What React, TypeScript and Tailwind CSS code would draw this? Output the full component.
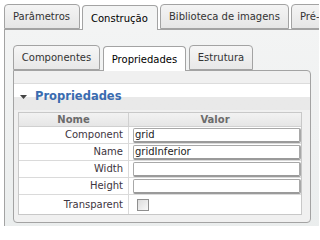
import React from 'react';

const font = { fontFamily: '"DejaVu Sans", Verdana, sans-serif' };

const OuterTab: React.FC<{ label: string; active?: boolean; w: string }> = ({ label, active, w }) => (
  <div
    className={`${w} h-[25px] shrink-0 border border-[#a3a3a3] rounded-t-[4px] flex items-center pl-[8px] text-[10px] text-[#333] ${
      active ? 'bg-[#f3f4f4] border-b-0 -mb-px relative z-10 text-black' : 'bg-gradient-to-b from-[#f4f4f4] to-[#e6e6e6] h-[24px]'
    }`}
  >
    {label}
  </div>
);

const InnerTab: React.FC<{ label: string; active?: boolean; w: string }> = ({ label, active, w }) => (
  <div
    className={`${w} h-[25px] shrink-0 border border-[#a3a3a3] rounded-t-[4px] flex items-center justify-center text-[10px] text-[#333] ${
      active ? 'bg-white border-b-0 -mb-px relative z-10 text-black' : 'bg-gradient-to-b from-[#f6f6f6] to-[#e8e8e8] h-[24px]'
    }`}
  >
    {label}
  </div>
);

const rows = [
  { label: 'Component', value: 'grid' },
  { label: 'Name', value: 'gridInferior' },
  { label: 'Width', value: '' },
  { label: 'Height', value: '' },
];

export default function App() {
  return (
    <div className="w-[319px] h-[226px] overflow-hidden bg-white" style={font}>
      <div className="pl-[4px] pt-[4px] w-[420px]">
        {/* outer tabs */}
        <div className="flex items-end gap-[2px]">
          <OuterTab label="Parâmetros" w="w-[76px]" />
          <OuterTab label="Construção" w="w-[76px]" active />
          <OuterTab label="Biblioteca de imagens" w="w-[129px]" />
          <OuterTab label="Pré-visualização" w="w-[110px]" />
        </div>

        {/* outer panel */}
        <div className="border border-[#a3a3a3] bg-gradient-to-b from-[#f3f4f4] to-[#eaeded] h-[210px] pl-[8px] pt-[15px]">
          {/* inner tabs */}
          <div className="flex items-end gap-[3px]">
            <InnerTab label="Componentes" w="w-[87px]" />
            <InnerTab label="Propriedades" w="w-[83px]" active />
            <InnerTab label="Estrutura" w="w-[64px]" />
          </div>

          {/* inner panel */}
          <div className="w-[298px] h-[153px] border border-[#a3a3a3] rounded-tr-[4px] rounded-b-[4px] bg-[#f0f0f0] pt-[12px]">
            {/* section header */}
            <div className="h-[27px] flex items-center bg-gradient-to-b from-white from-50% to-[#e9e9e9] to-50% border-t border-[#dcdcdc]">
              <svg width="7" height="4" viewBox="0 0 7 4" className="ml-[6px] mr-[8px]">
                <path d="M0 0h7L3.5 4z" fill="#444" />
              </svg>
              <span className="text-[11.5px] font-bold text-[#3a6cb0]">Propriedades</span>
            </div>

            {/* property table */}
            <div className="ml-[4px] mt-[2px] w-[284px] border border-[#c8c8c8] bg-white">
              <div className="grid grid-cols-[110px_1fr] h-[14px] bg-gradient-to-b from-[#f2f2f2] to-[#e6e6e6] border-b border-[#d0d0d0] text-[10px] font-bold text-[#6b6b6b] leading-[14px]">
                <div className="text-center border-r border-[#d0d0d0]">Nome</div>
                <div className="text-center">Valor</div>
              </div>
              {rows.map((r) => (
                <div key={r.label} className="grid grid-cols-[110px_1fr] h-[17px] border-b border-[#dadada] text-[10px]">
                  <div className="text-right pr-[5px] border-r border-[#dadada] text-[#3d3540] leading-[16px]">{r.label}</div>
                  <div className="pl-[4px] pt-[1px]">
                    <div className="h-[15px] border border-[#a8a8a8] border-b-2 border-r-2 border-b-[#9a9a9a] rounded-[2px] text-[10px] text-[#222] leading-[12px] pl-[1px]">
                      {r.value}
                    </div>
                  </div>
                </div>
              ))}
              <div className="grid grid-cols-[110px_1fr] h-[19px] text-[10px]">
                <div className="text-right pr-[5px] border-r border-[#dadada] text-[#3d3540] leading-[19px]">Transparent</div>
                <div className="pl-[8px] flex items-center">
                  <div className="w-[12px] h-[12px] border border-[#8f8f8f] bg-gradient-to-br from-[#dcdcdc] to-[#f8f8f8]" />
                </div>
              </div>
            </div>
          </div>
        </div>
      </div>
    </div>
  );
}
